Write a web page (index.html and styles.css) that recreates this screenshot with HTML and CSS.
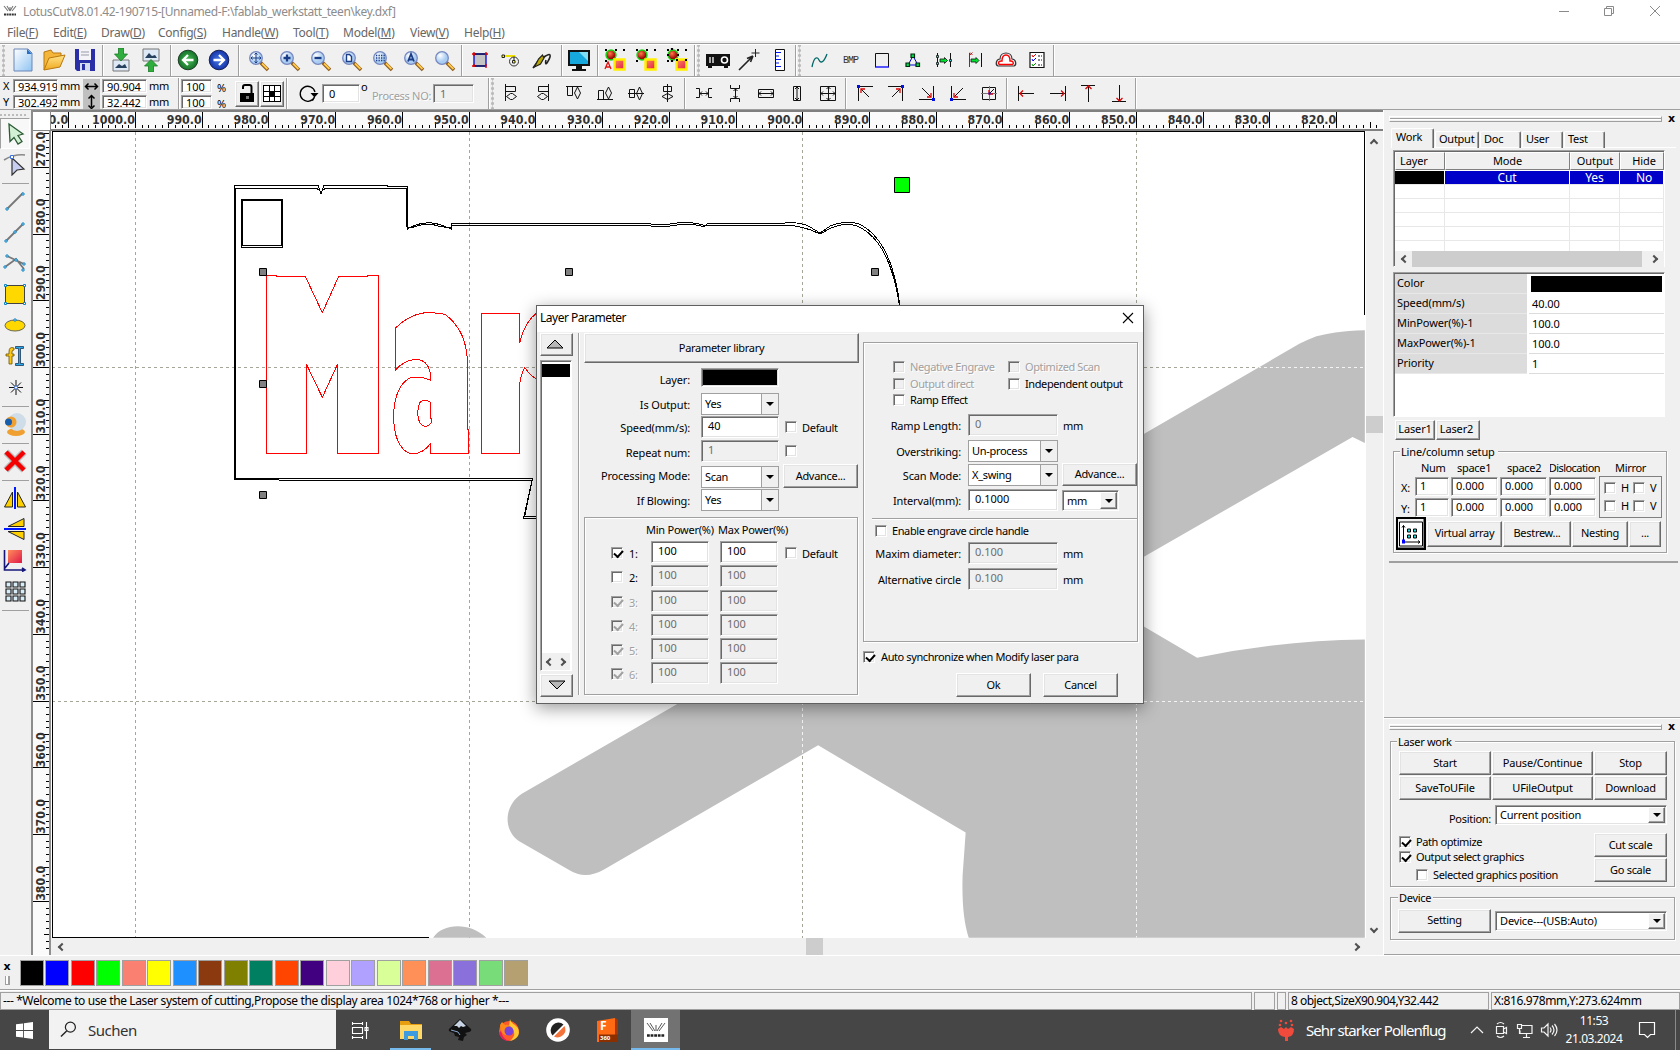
FILE: index.html
```html
<!DOCTYPE html>
<html lang="en">
<head>
<meta charset="utf-8">
<title>LotusCut</title>
<link rel="stylesheet" href="styles.css">
</head>
<body>
<svg class="defs" width="0" height="0">
  <defs>
    <radialGradient id="lens" cx=".35" cy=".3"><stop offset="0" stop-color="#fff"/><stop offset="1" stop-color="#a9cdf2"/></radialGradient>
    <linearGradient id="page" x2="1" y2="1"><stop offset="0" stop-color="#fff"/><stop offset="1" stop-color="#8fc4f2"/></linearGradient>
    <linearGradient id="gold" x2="0" y2="1"><stop offset="0" stop-color="#ffe48a"/><stop offset="1" stop-color="#f0a91e"/></linearGradient>
    <linearGradient id="redg" x2="1" y2="1"><stop offset="0" stop-color="#ff8d5c"/><stop offset="1" stop-color="#e01848"/></linearGradient>
    <radialGradient id="ball" cx=".4" cy=".35"><stop offset="0" stop-color="#ff7a4a"/><stop offset="1" stop-color="#a00808"/></radialGradient>
    <radialGradient id="greenb"><stop offset="0" stop-color="#49c055"/><stop offset="1" stop-color="#14702a"/></radialGradient>
    <radialGradient id="blueb"><stop offset="0" stop-color="#4a7be8"/><stop offset="1" stop-color="#1433a8"/></radialGradient>
    <symbol id="mag" viewBox="0 0 24 24"><path d="M13.500 13.500l7.500 7.500" stroke="#8a5a20" stroke-width="3.600"/><path d="M15 14.500l5.500 5.500" stroke="#ffc94a" stroke-width="1.800"/><circle cx="9" cy="9" r="6.300" fill="url(#lens)" stroke="#7788c0" stroke-width="1.300"/></symbol>
    <symbol id="group" viewBox="0 0 24 24"><g fill="#000"><path d="M2 1h2v2H2zM12 1h2v2h-2zM20 1h2v2h-2zM2 12h2v2H2zM20 20h2v2h-2zM11 20h2v2h-2z"/></g><circle cx="8" cy="7" r="5" fill="url(#ball)" stroke="#18d818" stroke-width="1.400"/><path d="M11.500 11.500h10v10h-10z" fill="url(#redg)" stroke="#fff000" stroke-width="2.500"/></symbol>
  </defs>
</svg>

<header class="titlebar">
  <svg class="app-icon" viewBox="0 0 14 12"><path d="M1 1l4 5M4 1l3 5M10 1L7 6M13 1L9 6M7 2v4" stroke="#777" stroke-width="1.100" fill="none"/><path d="M1 9.500h12" stroke="#333" stroke-width="2" stroke-dasharray="2 .6"/></svg>
  <span class="title">LotusCutV8.01.42-190715-[Unnamed-F:\fablab_werkstatt_teen\key.dxf]</span>
  <svg class="winbtns" viewBox="0 0 110 20"><g fill="none" stroke="#8a8a8a"><path d="M3 10.500h10M48.500 7.500h7v7h-7zM50.500 7V5.500h7v7H56M94 5l10 10M104 5L94 15"/></g></svg>
</header>
<nav class="menubar">
  <span class="m1">File(<u>F</u>)</span><span class="m2">Edit(<u>E</u>)</span><span class="m3">Draw(<u>D</u>)</span><span class="m4">Config(<u>S</u>)</span><span class="m5">Handle(<u>W</u>)</span><span class="m6">Tool(<u>T</u>)</span><span class="m7">Model(<u>M</u>)</span><span class="m8">View(<u>V</u>)</span><span class="m9">Help(<u>H</u>)</span>
</nav>

<div class="toolbar top">
  <div class="tg a1 grip">
    <svg viewBox="0 0 24 24"><path d="M3 1h14l4 4v18H3z" fill="url(#page)" stroke="#6b86b8"/><path d="M16 1l5 5h-5z" fill="#2b6fc4"/></svg>
    <svg viewBox="0 0 24 24"><path d="M2 22V4l7-2 2 3h8v4" fill="#f3b63a" stroke="#b9780f"/><path d="M2 22L7 10l16-3-5 12z" fill="url(#gold)" stroke="#b9780f"/></svg>
    <svg viewBox="0 0 24 24"><path d="M2 1h20v22H4l-2-2z" fill="#2a2fa8"/><path d="M6 1h12v11H6z" fill="#f4f4f8"/><path d="M8 4h8M8 7h8" stroke="#99a"/><path d="M7 15h10v8H7z" fill="#d6dcec"/><path d="M9 16h3v6H9z" fill="#2a2fa8"/></svg>
  </div>
  <div class="tg a2">
    <svg viewBox="0 0 24 24"><path d="M4 12h16v11H4z" fill="#dfe9f5" stroke="#777"/><path d="M6 20l4-4 3 2 3-2 2 4z" fill="#27405e"/><path d="M9.500 0h5v6h4L12 13 5.500 6h4z" fill="#2fae3e" stroke="#1a7a26" stroke-width=".8"/></svg>
    <svg viewBox="0 0 24 24"><path d="M4 1h16v12H4z" fill="#dfe9f5" stroke="#777"/><path d="M6 10l4-5 3 3 3-1 2 3z" fill="#27405e"/><path d="M9.500 24h5v-6h4L12 11.500 5.500 18h4z" fill="#2fae3e" stroke="#1a7a26" stroke-width=".8"/></svg>
  </div>
  <div class="tg a3">
    <svg viewBox="0 0 24 24"><circle cx="12" cy="12" r="9.800" fill="url(#greenb)" stroke="#1d3c23"/><path d="M17.500 12H8M12 7l-5 5 5 5" fill="none" stroke="#fff" stroke-width="2.300"/></svg>
    <svg viewBox="0 0 24 24"><circle cx="12" cy="12" r="9.800" fill="url(#blueb)" stroke="#162050"/><path d="M6.500 12H16M12 7l5 5-5 5" fill="none" stroke="#fff" stroke-width="2.300"/></svg>
  </div>
  <div class="tg a4">
    <svg viewBox="0 0 24 24"><use href="#mag"/><path d="M9 4v10M4 9h10M7.500 5.500L9 4l1.500 1.500M7.500 12.500L9 14l1.500-1.500M5.500 7.500L4 9l1.500 1.500M12.500 7.500L14 9l-1.500 1.500" fill="none" stroke="#1b3c86"/></svg>
    <svg viewBox="0 0 24 24"><use href="#mag"/><path d="M9 5.500v7M5.500 9h7" stroke="#1b3c86" stroke-width="2.300"/></svg>
    <svg viewBox="0 0 24 24"><use href="#mag"/><path d="M5.500 9h7" stroke="#1b3c86" stroke-width="2.300"/></svg>
    <svg viewBox="0 0 24 24"><use href="#mag"/><path d="M6.500 5.500h3l2 2v5h-5z" fill="#fff" stroke="#1b3c86" stroke-width="1.400"/></svg>
    <svg viewBox="0 0 24 24"><use href="#mag"/><path d="M5 6.500h9M5 9h9M5 11.500h9" stroke="#1b3c86" stroke-width="1.300" stroke-dasharray="1.300 1.200"/></svg>
    <svg viewBox="0 0 24 24"><use href="#mag"/><path d="M6 12.500L9 5l3 7.500M7 10.500h4" fill="none" stroke="#1b3c86" stroke-width="1.800"/></svg>
    <svg viewBox="0 0 24 24"><use href="#mag"/></svg>
  </div>
  <div class="tg a5">
    <svg viewBox="0 0 24 24"><path d="M6 6h12v12H6z" fill="#c4c4c4" stroke="#0000d8" stroke-width="1.300"/><path d="M6 6h12M18 18H6" stroke="#111"/><path d="M6 4v4M4 6h3M18 4v3M17 6h3M6 16v3M4 18h3M18 16v4" stroke="#e00000" stroke-width="1.300"/></svg>
    <svg viewBox="0 0 24 24"><path d="M4 8h12" stroke="#f0e000" stroke-width="2"/><path d="M3 7h2.500v2.500H3zM13.500 12.500h2.500v2.500h-2.500z" fill="#ff0" stroke="#222"/><path d="M15 9v4" stroke="#222"/><circle cx="15" cy="13.500" r="4.500" fill="none" stroke="#333"/></svg>
    <svg viewBox="0 0 24 24"><path d="M3 20l5-7M11 14c0-4 8-9 9-7s-2 6-3 8-2 0-1-3" fill="none" stroke="#222" stroke-width="1.600"/><path d="M4.500 19l4-8 4-4 1.500 3-3.500 6z" fill="#b8a800" stroke="#222" stroke-width="1.200"/></svg>
  </div>
  <div class="tg a6">
    <svg viewBox="0 0 24 24"><path d="M1 2h22v16H1z" fill="#111"/><path d="M3 4h18v12H3z" fill="#16a8dc"/><path d="M12 4h9v9z" fill="#7fdcf5"/><path d="M9 18h6v3h4v2H5v-2h4z" fill="#111"/></svg>
  </div>
  <div class="tg a7">
    <svg viewBox="0 0 24 24"><use href="#group"/><path d="M2 21l3-7 3 7M3 19h4" fill="none" stroke="#e01010" stroke-width="1.300"/></svg>
    <svg viewBox="0 0 24 24"><use href="#group"/></svg>
    <svg viewBox="0 0 24 24"><use href="#group"/><path d="M2 7h2M12 7h2M7 0v2M7 12v2M11 12h2M20 12h2" stroke="#000" stroke-width="2.200"/></svg>
  </div>
  <div class="tg a8 grip">
    <svg viewBox="0 0 24 24"><path d="M0 6h24v12h-2v2h-4v-2H6v2H2v-2H0z" fill="#111"/><circle cx="18.500" cy="12" r="3" fill="#111" stroke="#fff" stroke-width="1.600"/><path d="M4 9v6M7 9v6" stroke="#fff" stroke-width="1.300"/></svg>
    <svg viewBox="0 0 24 24"><path d="M2 22L16 8M16 8l-6 2.500M16 8l-2.500 6" stroke="#222" stroke-width="1.600" fill="none"/><path d="M18.500 1v8M14.500 5h8" stroke="#222"/></svg>
    <svg viewBox="0 0 24 24"><path d="M7.500 1.500h9v21h-9z" fill="#fff" stroke="#111"/><path d="M8 4.500h5M8 8h3M8 11.500h5M8 15h3M8 18.500h5" stroke="#0018f0" stroke-width="1.200"/></svg>
  </div>
  <div class="tg a9 grip">
    <svg viewBox="0 0 24 24"><path d="M4 19c2-10 5-11 7-7s5 2 8-6" fill="none" stroke="#006868" stroke-width="1.300"/></svg>
    <span class="bmp">BMP</span>
    <svg viewBox="0 0 24 24"><path d="M5.500 19V5.500h13V19" fill="none" stroke="#111"/><path d="M5 19h14" stroke="#00f" stroke-width="1.300"/></svg>
    <svg viewBox="0 0 24 24"><path d="M12 8l-5 9h10z" fill="none" stroke="#0000d0"/><path d="M10 6h3.500v3.500H10zM5 15h3.500v3.500H5zM15 15h3.500v3.500H15z" fill="#00d84a" stroke="#002a10" stroke-width="1.200"/></svg>
    <svg viewBox="0 0 24 24"><path d="M5.500 5v14M18.500 5v14" stroke="#111"/><path d="M8 11h4.500V9.500L15.500 12.500l-3 3V14H8z" fill="#00e030" stroke="#111" stroke-width=".8"/><path d="M4.500 7.500h2v2h-2zM4.500 14.500h2v2h-2zM17.500 11.500h2v2h-2z" fill="#40d8d8" stroke="#111" stroke-width=".8"/></svg>
    <svg viewBox="0 0 24 24"><path d="M6.500 5v14" stroke="#e00000"/><path d="M18.500 5v14" stroke="#111"/><path d="M8 11h5V9.500l3 3-3 3V14H8z" fill="#00e030" stroke="#111" stroke-width=".8"/><path d="M7 4.500l2.500 2.500M9.500 4.500L7 7" stroke="#a00" stroke-width=".8"/></svg>
    <svg viewBox="0 0 24 24"><path d="M4 18C1 17 2 11 6 11 6 3 18 3 18 11c4 0 5 6 2 7z" fill="none" stroke="#333" stroke-width="1.200"/><path d="M5.500 16.500c-2-1-1-4 2.500-3.500 0-8 8-8 8 0 3.500-.5 4 2.500 2.500 3.500z" fill="#fff" stroke="#f00" stroke-width="1.400"/></svg>
    <svg viewBox="0 0 24 24"><path d="M5 4.500h14v15H5z" fill="#fff" stroke="#111" stroke-width="1.200"/><path d="M7 7l1 2 3-3" fill="none" stroke="#e00"/><path d="M7 11l1 2 3-3" fill="none" stroke="#00f"/><path d="M7 16l1 2 3-3" fill="none" stroke="#090"/><path d="M13 8h2M16 8h1M13 12h2M16 12h1M13 17h2M16 17h1" stroke="#111" stroke-width="1.200"/></svg>
  </div>
</div>

<div class="toolbar second">
  <div class="tg b1">
    <div class="pair lab"><span>X</span><span>Y</span></div>
    <div class="pair"><span class="field w45">934.919</span><span class="field w45">302.492</span></div>
    <div class="pair unit"><span>mm</span><span>mm</span></div>
    <div class="axes"><svg viewBox="0 0 17 30"><path d="M3 7.500h11M5.500 4.500l-3 3 3 3M11.500 4.500l3 3-3 3M8.500 17v11M5.500 19.500l3-3 3 3M5.500 26.500l3 3 3-3" fill="none" stroke="#000" stroke-width="1.500"/></svg></div>
    <div class="pair"><span class="field w45">90.904</span><span class="field w45">32.442</span></div>
    <div class="pair unit"><span>mm</span><span>mm</span></div>
  </div>
  <div class="tg b2">
    <div class="pair"><span class="field w31">100</span><span class="field w31">100</span></div>
    <div class="pair pct"><span>%</span><span>%</span></div>
    <div class="btn sq"><svg viewBox="0 0 22 24"><path d="M4 11h14v9H4z" fill="#000"/><path d="M15.500 11V5q0-2-2-2H9Q7 3 7 5v2" fill="none" stroke="#000" stroke-width="2"/><path d="M10 14h3v3h-3z" fill="#777"/></svg></div>
    <div class="btn sq"><svg viewBox="0 0 22 24"><g shape-rendering="crispEdges"><path d="M2.500 3.500h17v16h-17zM8.500 4v15M13.500 4v15M3 9.500h16M3 14.500h16" fill="#fff" stroke="#000"/><path d="M8 9h6v6H8z" fill="#000"/></g></svg></div>
  </div>
  <div class="tg b3">
    <svg viewBox="0 0 24 24"><path d="M18.500 15A7.500 7.500 0 1 1 19 10" fill="none" stroke="#000" stroke-width="1.300"/><path d="M14.500 11h8l-4 4.500z"/><path d="M18 16l-1.500 3" stroke="#000"/></svg>
    <span class="field rot">0</span><span class="deg">o</span><span class="dis proc">Process NO:</span><span class="field off pno">1</span>
  </div>
  <div class="tg b4 grip">
    <svg viewBox="0 0 24 24"><g class="k"><path d="M5.500 3v17M5.500 5.500h10v5h-10M6.500 15.500l4-3h2l4 3-4 3h-2z"/></g></svg>
    <svg viewBox="0 0 24 24"><g class="k"><path d="M17.500 3v17M17.500 5.500h-10v5h10M16.500 15.500l-4-3h-2l-4 3 4 3h2z"/></g></svg>
    <svg viewBox="0 0 24 24"><g class="k"><path d="M4 5.500h16M5.500 5.500v9h5v-9M15.500 6l3 6-3 6-3-6z"/></g></svg>
    <svg viewBox="0 0 24 24"><g class="k"><path d="M4 18.500h16M5.500 18.500v-9h5v9M15.500 6l3 6-3 6-3-6z"/></g></svg>
    <svg viewBox="0 0 24 24"><g class="k"><path d="M4 12.500h16M5.500 8.500h5v8h-5zM15.500 6l3 6.500-3 6.500-3-6.500z"/></g></svg>
    <svg viewBox="0 0 24 24"><g class="k"><path d="M12.500 3v18M8.500 5.500h8v5h-8zM12.500 12.500l5.500 3-5.500 3-5.500-3z"/></g></svg>
  </div>
  <div class="tg b5">
    <svg viewBox="0 0 24 24"><g class="k"><path d="M4 7.500h3.500v9H4M20 7.500h-3.500v9H20M8 12.500h8M10 10.500l-2 2 2 2M14 10.500l2 2-2 2"/></g></svg>
    <svg viewBox="0 0 24 24"><g class="k"><path d="M7.500 4v3.500h9V4M7.500 21v-3.500h9V21M12.500 8v9M10.500 10l2-2 2 2M10.500 15l2 2 2-2"/></g></svg>
    <svg viewBox="0 0 24 24"><g class="k"><path d="M4.500 8.500h15v8h-15zM5 12.500h14M7 10.500l-2 2 2 2M17 10.500l2 2-2 2"/></g></svg>
    <svg viewBox="0 0 24 24"><g class="k"><path d="M8.500 5.500h7v14h-7zM12 6v13M10 8l2-2 2 2M10 17l2 2 2-2"/></g></svg>
    <svg viewBox="0 0 24 24"><g class="k"><path d="M4.500 5.500h15v14h-15zM5 12.500h14M12.500 6v13M7 10.500l-2 2 2 2M17 10.500l2 2-2 2M10.500 8l2-2 2 2M10.500 17l2 2 2-2"/></g></svg>
  </div>
  <div class="tg b6">
    <svg viewBox="0 0 24 24"><g class="k"><path d="M5.500 20V5.500H20M8 8l8 8"/></g><path d="M8 12V8h4" class="r"/><path d="M4 4h3v3H4z" class="b"/></svg>
    <svg viewBox="0 0 24 24"><g class="k"><path d="M18.500 20V5.500H4M16 8l-8 8"/></g><path d="M12 8h4v4" class="r"/><path d="M17 4h3v3h-3z" class="b"/></svg>
    <svg viewBox="0 0 24 24"><g class="k"><path d="M18.500 5v13.500H4M7 7l9 9"/></g><path d="M12 16h4v-4" class="r"/><path d="M17 17h3v3h-3z" class="b"/></svg>
    <svg viewBox="0 0 24 24"><g class="k"><path d="M5.500 5v13.500H20M17 7l-9 9"/></g><path d="M8 12v4h4" class="r"/><path d="M4 17h3v3H4z" class="b"/></svg>
    <svg viewBox="0 0 24 24"><g class="k"><path d="M5.500 6.500h13v12h-13zM17 8l-4 4"/></g><path d="M4 12.500h16M12.500 5v15" stroke="#777"/><path d="M12 9v4h4" class="r"/><path d="M11.500 11.500h2v2h-2z" class="b"/></svg>
  </div>
  <div class="tg b7">
    <svg viewBox="0 0 24 24"><g class="k"><path d="M4.500 5v15M5 12.500h15"/></g><path d="M9 9.500l-3 3 3 3" class="r"/></svg>
    <svg viewBox="0 0 24 24"><g class="k"><path d="M20.500 5v15M5 12.500h15"/></g><path d="M16 9.500l3 3-3 3" class="r"/></svg>
    <svg viewBox="0 0 24 24"><g class="k"><path d="M5 4.500h14M12.500 5v16"/></g><path d="M9.500 8l3-3 3 3" class="r"/></svg>
    <svg viewBox="0 0 24 24"><g class="k"><path d="M5 20.500h14M12.500 4v16"/></g><path d="M9.500 17l3 3 3-3" class="r"/></svg>
  </div>
</div>

<main class="work">
  <aside class="tools">
    <div class="hdots"></div>
    <div class="cell on"><svg viewBox="0 0 24 24"><path d="M6 2l14 10-5 1.500 4 6-4 2.500-4-6.500-4 4z" fill="#d2f0d4" stroke="#2c5a34" stroke-width="1.300"/></svg></div>
    <div class="cell"><svg viewBox="0 0 24 24"><path d="M1 8q10-6 21-5" fill="none" stroke="#888" stroke-width="1.500"/><path d="M9 6l12 11-7 1-5 5z" fill="#c9cff0" stroke="#333" stroke-width="1.200"/><path d="M7.500 3.500h3v3h-3z" fill="#fff" stroke="#3a6fe0"/></svg></div>
    <hr>
    <div class="cell"><svg viewBox="0 0 24 24"><path d="M4 20L20 4" stroke="#777" stroke-width="1.800"/><path class="nd" d="M3 19h2v2H3zM19 4h2v2h-2z"/></svg></div>
    <div class="cell"><svg viewBox="0 0 24 24"><path d="M3 21L20 4" stroke="#777" stroke-width="1.800"/><path class="nd" d="M2 20h2v2H2zM19 3h2v2h-2zM11 11h2v2h-2z"/></svg></div>
    <div class="cell"><svg viewBox="0 0 24 24"><path d="M2 16l11-8 8 10M4 5l17 8" stroke="#777" stroke-width="1.800" fill="none"/><path class="nd" d="M1 15h2v2H1zM3 4h2v2H3zM12 8h2v2h-2zM20 12h2v2h-2zM19 18h2v2h-2z"/></svg></div>
    <div class="cell"><svg viewBox="0 0 24 24"><path d="M2.500 3.500h19v18h-19z" fill="#ffd800" stroke="#444"/><path class="nd" d="M1.500 2.500h2v2h-2zM20.500 2.500h2v2h-2zM1.500 20.500h2v2h-2zM20.500 20.500h2v2h-2z"/></svg></div>
    <div class="cell"><svg viewBox="0 0 24 24"><ellipse cx="12" cy="12.500" rx="10" ry="5.500" fill="#ffd800" stroke="#665"/><path class="nd" d="M11 6h2v2h-2z"/></svg></div>
    <div class="cell"><svg viewBox="0 0 24 24"><path d="M11 4q-5-2-5 4v2H3v2h3v8h3v-8h2v-2H9V8q0-2 2-2z" fill="#ffc810" stroke="#6a5000" stroke-width=".8"/><path d="M12.500 2.500h8v2h-3v15h3v2h-8v-2h3v-15h-3z" fill="#28a8e8" stroke="#1a3a5a" stroke-width=".8"/></svg></div>
    <div class="cell"><svg viewBox="0 0 24 24"><path d="M13 5v15M6 12.500h14M8 7.500l10 10M18 7.500l-10 10" stroke="#111"/><circle cx="13" cy="12.500" r="1.600" fill="#fff" stroke="#3a6fe0"/></svg></div>
    <hr>
    <div class="cell"><svg viewBox="0 0 24 24"><ellipse cx="13" cy="20" rx="9" ry="4" fill="#f0a030"/><circle cx="14" cy="10" r="9" fill="#cfdde8"/><circle cx="8" cy="10" r="5.500" fill="#f0a030"/><circle cx="5.500" cy="10" r="3.500" fill="#155fae"/></svg></div>
    <hr>
    <div class="cell"><svg viewBox="0 0 24 24"><path d="M3 3l18 18M21 3L3 21" stroke="#bbb" stroke-width="7"/><path d="M3 3l18 18M21 3L3 21" stroke="#f40000" stroke-width="4.500"/></svg></div>
    <hr>
    <div class="cell"><svg viewBox="0 0 24 24"><path d="M9.500 6v15H1.500zM14.500 6v15h8z" fill="#ffd000" stroke="#222"/><path d="M12 1v22" stroke="#0018ff" stroke-width="2"/></svg></div>
    <div class="cell"><svg viewBox="0 0 24 24"><path d="M21 1.500v8H5zM21 22.500v-8H5z" fill="#ffd000" stroke="#222"/><path d="M1 12h22" stroke="#0018ff" stroke-width="2"/></svg></div>
    <div class="cell"><svg viewBox="0 0 24 24"><path d="M5 2h14v13H5z" fill="url(#redg)"/><path d="M1.500 2v20H22M19 20l3 2-3 1.500M2 20l4-5" fill="none" stroke="#16167a" stroke-width="1.600"/></svg></div>
    <div class="cell"><svg viewBox="0 0 24 24"><path d="M3 3h5v5H3zM10 3h5v5h-5zM17 3h5v5h-5zM3 10h5v5H3zM10 10h5v5h-5zM17 10h5v5h-5zM3 17h5v5H3zM10 17h5v5h-5zM17 17h5v5h-5z" fill="#d8ecf8" stroke="#111" stroke-width="1.100"/></svg></div>
    <hr>
  </aside>

  <section class="editor">
    <div class="corner"></div>
    <svg id="hruler" class="hruler" viewBox="51 110 1332 21"></svg>
    <svg id="vruler" class="vruler" viewBox="33 131 18 824"></svg>
    <svg class="canvas" viewBox="51 131 1315 807">
      <defs>
        <clipPath id="inGrey"><use href="#greyShape" transform="translate(430 170) scale(.6122 .5038)"/></clipPath>
        <path id="greyShape" d="M1527 318C1490 318 1462 326 1448 330Q1435 336 1420 345L404 1060L150 1238C122 1260 118 1308 145 1332L228 1390Q254 1410 285 1388L634 1142L875 1315L870 1400Q868 1480 880 1524L1527 1524V932Q1390 934 1253 968L1068 836L1507 530L1527 542Z"/>
        <path id="grid" d="M135.500 132V938M469.500 132V938M802.500 132V938M1136.500 132V938M52 367.500H1366M52 701.500H1366"/>
      </defs>
      <rect x="51" y="131" width="1315" height="807" fill="#fff"/>
      <use href="#grid" class="dash"/>
      <g transform="translate(430 170) scale(.6122 .5038)" fill="#bfbfbf"><use href="#greyShape"/><path d="M5 1524C20 1495 65 1492 92 1524z"/></g>
      <g clip-path="url(#inGrey)"><use href="#grid" class="dash light"/></g>
      <path d="M52.500 937V131.500H1364.500V315M52 937.500H429" class="ink"/>
      <g class="ink">
        <path d="M234.500 480V185.500H318L321 194L324 185.500H387V186.500H407.500V229L413 226Q428 220 441 225L451.500 229V223.500H634L667 224.500Q690 220 706 226L707.500 223.500H780Q800 221 810 227L820 233L831 225.500Q846 220 859 224Q892 240 900 306"/>
        <path d="M235.500 479V188.500H317L321 192L325 188.500H406.500V227L412 227.500Q428 222 438 226L451 228V225.500H634L667 226.500Q690 222 704 227L706 225.500H780Q800 224 820 234L832 227.500Q846 222 857 226Q890 240 899.500 306"/>
        <path d="M234 478.500H532.500L524.500 517V516.500H560M279 480.500H532L523.500 518.500H560M234 479.500H279"/>
        <path d="M241.500 199.500H282.500V247.500H241.500zM242.500 200.500H281.500V245.500H242.500z"/>
      </g>
      <g class="ink red" transform="translate(230 170) scale(.33333)">
        <path d="M109.500 316.500H141V319.500H226L277 428L326 319.500H414V316.500H445.500V850.500H322.500V583L277 682L229.500 583V850.500H109.500z"/>
        <path d="M497 600V474C530 440 570 428 600 427L645 433C695 470 712 520 712 580L713 780H716V850H602V820C585 845 560 852 543 852C505 840 491 790 491 740C491 680 510 635 545 622H575L602 631C603 595 590 568 556 568C530 570 510 585 497 600zM602 697Q582 685 570 697Q556 730 570 760Q584 776 598 764L604 757V745H602z"/>
        <path d="M940 420C905 430 880 470 869 520V430.500H754.500V850.500H868.500V645Q872 615 884 592Q905 625 940 636"/>
      </g>
      <g fill="#808080" stroke="#000"><path d="M259.500 268.500h7v7h-7zM259.500 380.500h7v7h-7zM259.500 491.500h7v7h-7zM565.500 268.500h7v7h-7zM871.500 268.500h7v7h-7z"/><path fill="#0f0" d="M894.500 177.500h15v15h-15z"/></g>
    </svg>
    <div class="vscroll"><i class="chev up"></i><b></b><i class="chev down"></i></div>
    <div class="hscroll"><i class="chev left"></i><b></b><i class="chev right"></i></div>
  </section>

  <aside class="panels">
    <section class="panel upper">
      <div class="caption"><i></i><b>x</b></div>
      <div class="tabs"><span class="on">Work</span><span>Output</span><span>Doc</span><span>User</span><span>Test</span></div>
      <div class="layers">
        <div class="lr head"><span>Layer</span><span>Mode</span><span>Output</span><span>Hide</span></div>
        <div class="lr sel"><span></span><span>Cut</span><span>Yes</span><span>No</span></div>
        <div class="lr"><span></span><span></span><span></span><span></span></div>
        <div class="lr"><span></span><span></span><span></span><span></span></div>
        <div class="lr"><span></span><span></span><span></span><span></span></div>
        <div class="lr"><span></span><span></span><span></span><span></span></div>
        <div class="lr last"><span></span><span></span><span></span><span></span></div>
        <div class="lscroll"><i class="chev left"></i><b></b><i class="chev right"></i></div>
      </div>
      <div class="props">
        <div><span>Color</span><b class="black"></b></div>
        <div><span>Speed(mm/s)</span><b>40.00</b></div>
        <div><span>MinPower(%)-1</span><b>100.0</b></div>
        <div><span>MaxPower(%)-1</span><b>100.0</b></div>
        <div><span>Priority</span><b>1</b></div>
      </div>
      <div class="lasers"><span class="btn">Laser1</span><span class="btn">Laser2</span></div>
      <div class="box array">
        <span class="legend">Line/column setup</span>
        <div class="ahead"><span>Num</span><span>space1</span><span>space2</span><span class="clip"><em>Dislocation</em></span><span>Mirror</span></div>
        <div class="abody">
          <div class="agrid">
            <span>X:</span><span class="field">1</span><span class="field">0.000</span><span class="field">0.000</span><span class="field">0.000</span>
            <span>Y:</span><span class="field">1</span><span class="field">0.000</span><span class="field">0.000</span><span class="field">0.000</span>
          </div>
          <div class="mirror"><i class="ck"></i><span>H</span><i class="ck"></i><span>V</span><i class="ck"></i><span>H</span><i class="ck"></i><span>V</span></div>
        </div>
        <div class="abtns">
          <span class="abtn"><svg viewBox="0 0 24 25"><path d="M.5.500h23v24H.5z" fill="#fff" stroke="#000"/><path d="M4.500 4v16.500H21M3 6l1.500-2L6 6M19 19l2 1.500L19 22" fill="none" stroke="#000"/><path d="M3 18h3v4H3z" fill="#00f"/><path d="M8.500 7.500h3v3h-3zM14.500 7.500h3v3h-3zM8.500 13.500h3v3h-3zM14.500 13.500h3v3h-3z" fill="#20e0e0" stroke="#000"/></svg></span>
          <span class="btn v1">Virtual array</span><span class="btn v2">Bestrew...</span><span class="btn v3">Nesting</span><span class="btn v4">...</span>
        </div>
      </div>
    </section>
    <section class="panel lower">
      <div class="caption"><i></i><b>x</b></div>
      <div class="box job">
        <span class="legend">Laser work</span>
        <div class="jbtns"><span class="btn">Start</span><span class="btn">Pause/Continue</span><span class="btn">Stop</span><span class="btn">SaveToUFile</span><span class="btn">UFileOutput</span><span class="btn">Download</span></div>
        <div class="pos"><span>Position:</span><span class="combo sunk"><em>Current position</em><i></i></span></div>
        <div class="jopts">
          <div class="checks">
            <label><i class="ck tick"></i>Path optimize</label>
            <label><i class="ck tick"></i>Output select graphics</label>
            <label class="sub"><i class="ck"></i>Selected graphics position</label>
          </div>
          <div class="scales"><span class="btn">Cut scale</span><span class="btn">Go scale</span></div>
        </div>
      </div>
      <div class="box device">
        <span class="legend">Device</span>
        <span class="btn">Setting</span><span class="combo sunk"><em>Device---(USB:Auto)</em><i></i></span>
      </div>
    </section>
  </aside>
</main>

<div class="palette">
  <div class="pgrip"><b>x</b><i></i></div>
  <i class="c1"></i><i class="c2"></i><i class="c3"></i><i class="c4"></i><i class="c5"></i><i class="c6"></i><i class="c7"></i><i class="c8"></i><i class="c9"></i><i class="c10"></i><i class="c11"></i><i class="c12"></i><i class="c13"></i><i class="c14"></i><i class="c15"></i><i class="c16"></i><i class="c17"></i><i class="c18"></i><i class="c19"></i><i class="c20"></i>
</div>

<footer class="status"><span>--- *Welcome to use the Laser system of cutting,Propose the display area 1024*768 or higher *---</span><span></span><span></span><span class="size">8 object,SizeX90.904,Y32.442</span><span>X:816.978mm,Y:273.624mm</span></footer>

<div class="taskbar">
  <div class="start"><svg viewBox="0 0 16 16"><path d="M0 2.200L6.600 1.300V7.600H0zM7.400 1.200L16 0V7.600H7.400zM0 8.400H6.600V14.700L0 13.800zM7.400 8.400H16V16L7.400 14.800z" fill="#fff"/></svg></div>
  <div class="search"><svg viewBox="0 0 18 18"><circle cx="11" cy="6.500" r="5.300" fill="none" stroke="#222" stroke-width="1.300"/><path d="M7 10.500L1 16.500" stroke="#222" stroke-width="1.500"/></svg>Suchen</div>
  <div class="task"><svg viewBox="0 0 24 24"><path d="M3.500 9.500h10v6h-10zM3 5.500h11M3 19.500h11M3.500 4v3M13.500 4v3M3.500 18v3M13.500 18v3M17.500 4v17M16 9.500h3v3h-3z" fill="none" stroke="#fff" stroke-width="1.100"/></svg></div>
  <div class="task run"><svg viewBox="0 0 24 24"><path d="M1 3h9l2 3h11v15H1z" fill="#e8a010"/><path d="M1 7h22v14H1z" fill="#ffd868"/><path d="M5 22v-9h14v9h-4v-4H9v4z" fill="#3f9be0"/></svg></div>
  <div class="task"><svg viewBox="0 0 24 24"><path d="M12 1l11 10q1 2-2 3l-4 1 2 2-3 2-1 4-5-1 1-3-4-1-1-3-3-1q-3-1-2-3z" fill="#111"/><path d="M12 2l6 6-3 1-2-1-2 2-2-2-3 0z" fill="#c8d4e4"/><path d="M3 12l7 2 2 3" stroke="#8aa8cc" fill="none"/></svg></div>
  <div class="task"><svg viewBox="0 0 24 24"><circle cx="12" cy="13" r="10" fill="#ff5a2a"/><path d="M13 1q1 4 5 6 6 5 3 11-3 4-8 5 9-8-1-15z" fill="#ffc830"/><path d="M3 7l2-3 3 3q5-1 7 4l-2 1q1 6-5 5-5-2-5-10z" fill="#ff8a1a"/><circle cx="12" cy="13" r="4.500" fill="#7a42d8"/><path d="M2 15q3 9 11 8-7-1-9-10z" fill="#e82060"/></svg></div>
  <div class="task"><svg viewBox="0 0 24 24"><circle cx="12" cy="12" r="11.800" fill="#fff"/><path d="M17.500 6.500A7.800 7.800 0 0 0 6.500 17.500z" fill="#222"/><path d="M18.500 8A7.800 7.800 0 0 1 8 18.500z" fill="#f4733a"/></svg></div>
  <div class="task f360"><svg viewBox="0 0 24 24"><path d="M2 3l18-3v24H2z" fill="#ff6a13"/><path d="M20 0l3 2v22h-3z" fill="#a83800"/><path d="M4 16.500h19V24H4z" fill="#8a2f00"/></svg><b>F</b><small>360</small></div>
  <div class="task run active"><svg viewBox="0 0 24 24"><path d="M0 0h24v24H0z" fill="#fff"/><path d="M3 5l6 8M6 5l5 8M21 5l-6 8M18 5l-5 8M12 7v6" stroke="#444" stroke-width=".9" fill="none"/><path d="M3 17.500h18" stroke="#222" stroke-width="2.600" stroke-dasharray="2.800 .8"/></svg></div>
  <div class="tray">
    <svg class="pollen" viewBox="0 0 18 24"><g fill="#f04a3c"><path d="M1 11l3-2 3 2 2-2 2 2 3-2 3 2q0 7-6 8v4H8v-4Q1 18 1 11z"/><circle cx="9" cy="5" r="1.300"/><circle cx="4" cy="3" r="1.300"/><circle cx="14" cy="3" r="1.300"/><circle cx="3" cy="7" r="1.300"/><circle cx="15" cy="7" r="1.300"/></g></svg>
    <span class="news">Sehr starker Pollenflug</span>
    <svg class="ticons" viewBox="0 0 88 24"><g fill="none" stroke="#f4f4f4" stroke-width="1.200"><path d="M1 15l6-6 6 6"/><path d="M26.500 8.500h7v7h-7zM33.500 11l3-1.500v6l-3-1.500M27 6q3.500-3 7 0M27 18q3.500 3 7 0"/><path d="M51 7.500h11v8H50v-3M56.500 16v3M53 19.500h7M47.500 6.500h4v4h-4zM49.500 10v6"/><path d="M71.500 10h2.500l4-4v12l-4-4h-2.500zM80 9.500q2 2.500 0 5M82 7.500q4 4.500 0 9M84.500 6q5 6 0 12"/></g></svg>
    <span class="clock">11:53<br>21.03.2024</span>
    <svg class="note" viewBox="0 0 18 18"><path d="M1.500 1.500h15v12h-4l-3 3-3-3h-5z" fill="none" stroke="#fff" stroke-width="1.200"/></svg>
    <i class="peek"></i>
  </div>
</div>

<div class="dialog">
  <div class="dtitle"><span>Layer Parameter</span><svg viewBox="0 0 12 12"><path d="M1 1l10 10M11 1L1 11" stroke="#000" stroke-width="1.100"/></svg></div>
  <div class="dbody">
    <div class="dlist">
      <span class="btn first"><svg viewBox="0 0 18 10"><path d="M1 9L9 1l8 8z" fill="#b8b8b8" stroke="#000"/></svg></span>
      <div class="list"><b></b><div><i class="chev left"></i><i class="chev right"></i></div></div>
      <span class="btn"><svg viewBox="0 0 18 10"><path d="M1 1l8 8 8-8z" fill="#b8b8b8" stroke="#000"/></svg></span>
    </div>
    <div class="dmid">
      <span class="btn lib">Parameter library</span>
      <div class="form">
        <div class="fr f1"><span class="fl">Layer:</span><span class="field swatch"></span></div>
        <div class="fr f2"><span class="fl">Is Output:</span><span class="combo"><em>Yes</em><i></i></span></div>
        <div class="fr f3"><span class="fl">Speed(mm/s):</span><span class="field">40</span><i class="ck"></i><span class="df">Default</span></div>
        <div class="fr f4"><span class="fl">Repeat num:</span><span class="field off">1</span><i class="ck"></i></div>
        <div class="fr f5"><span class="fl">Processing Mode:</span><span class="combo"><em>Scan</em><i></i></span><span class="btn adv">Advance...</span></div>
        <div class="fr f6"><span class="fl">If Blowing:</span><span class="combo"><em>Yes</em><i></i></span></div>
      </div>
      <div class="box power">
        <div class="phead"><span>Min Power(%)</span><span>Max Power(%)</span></div>
        <div class="pr"><i class="ck tick"></i><span>1:</span><span class="field">100</span><span class="field">100</span><i class="ck"></i><span class="df">Default</span></div>
        <div class="pr"><i class="ck"></i><span>2:</span><span class="field off">100</span><span class="field off">100</span></div>
        <div class="pr"><i class="ck tick off"></i><span class="dis">3:</span><span class="field off">100</span><span class="field off">100</span></div>
        <div class="pr"><i class="ck tick off"></i><span class="dis">4:</span><span class="field off">100</span><span class="field off">100</span></div>
        <div class="pr"><i class="ck tick off"></i><span class="dis">5:</span><span class="field off">100</span><span class="field off">100</span></div>
        <div class="pr"><i class="ck tick off"></i><span class="dis">6:</span><span class="field off">100</span><span class="field off">100</span></div>
      </div>
    </div>
    <div class="dright">
      <div class="box scan">
        <div class="opts">
          <label class="dis"><i class="ck off"></i>Negative Engrave</label><label class="dis"><i class="ck off"></i>Optimized Scan</label>
          <label class="dis"><i class="ck off"></i>Output direct</label><label><i class="ck"></i>Independent output</label>
          <label><i class="ck"></i>Ramp Effect</label>
        </div>
        <div class="sr s1"><span class="fl">Ramp Length:</span><span class="field off">0</span><span class="mm">mm</span></div>
        <div class="sr s2"><span class="fl">Overstriking:</span><span class="combo"><em>Un-process</em><i></i></span></div>
        <div class="sr s3"><span class="fl">Scan Mode:</span><span class="combo"><em>X_swing</em><i></i></span><span class="btn adv">Advance...</span></div>
        <div class="sr s4"><span class="fl">Interval(mm):</span><span class="field">0.1000</span><span class="combo sunk unitc"><em>mm</em><i></i></span></div>
        <div class="rule"></div>
        <label class="eng"><i class="ck"></i>Enable engrave circle handle</label>
        <div class="sr s5"><span class="fl">Maxim diameter:</span><span class="field off">0.100</span><span class="mm">mm</span></div>
        <div class="sr s6"><span class="fl">Alternative circle</span><span class="field off">0.100</span><span class="mm">mm</span></div>
      </div>
      <label class="sync"><i class="ck tick"></i>Auto synchronize when Modify laser para</label>
      <div class="okrow"><span class="btn">Ok</span><span class="btn">Cancel</span></div>
    </div>
  </div>
</div>
<script src="script.js"></script>
</body>
</html>
```
FILE: styles.css
```css
* { box-sizing: border-box; }
body { margin: 0; width: 1680px; height: 1050px; overflow: hidden; background: #f0f0f0; color: #000; font: 11px/14px "Noto Sans", sans-serif; letter-spacing: -.3px; white-space: nowrap; }
em, i { font-style: normal; }
svg { display: block; flex: none; }
.defs { position: absolute; }
.k { fill: none; stroke: #111; }
.r { fill: none; stroke: #e00000; stroke-width: 1.3; }
.b { fill: #0010e8; }
.nd { fill: #fff; stroke: #0a84c8; }

.titlebar { display: flex; height: 22px; background: #fff; align-items: center; color: #8c8c8c; font-size: 12px; padding: 0 11px 0 3px; }
.app-icon { width: 14px; height: 12px; margin-right: 6px; }
.title { letter-spacing: -.38px; padding-top: 1px; }
.winbtns { width: 110px; height: 20px; margin-left: auto; margin-right: 3px; }
.menubar { display: flex; height: 19px; background: #fff; padding-left: 7px; color: #666; font-size: 12px; line-height: 21px; letter-spacing: -.25px; }
.m1 { width: 46px; } .m2 { width: 48px; } .m3 { width: 57px; } .m4 { width: 64px; } .m5 { width: 71px; } .m6 { width: 50px; } .m7 { width: 67px; } .m8 { width: 54px; }

.toolbar { display: flex; background: #f0f0f0; }
.toolbar.top { height: 36px; padding-top: 4px; background: linear-gradient(#f0f0f0 2px, #a0a0a0 2px 3px, #fff 3px 4px, #f0f0f0 4px); border-bottom: 1px solid #a0a0a0; }
.toolbar.second { height: 33px; border-top: 1px solid #fff; border-bottom: 1px solid #a0a0a0; }
.tg { display: flex; align-items: center; border-right: 1px solid #a0a0a0; box-shadow: 1px 0 #fff; flex: none; }
.tg > svg { width: 24px; height: 24px; margin: -2px 3.5px 0; }
.grip { background: radial-gradient(#bbb 1px, transparent 1.500px) 2px 3px / 3px 5px repeat-y; }
.a1 { width: 103px; padding-left: 7.5px; } .a2 { width: 68px; padding-left: 3px; } .a3 { width: 68px; padding-left: 1px; } .a4 { width: 223px; padding-left: 4px; } .a5 { width: 100px; padding-left: 2px; } .a6 { width: 36px; padding-left: 1px; } .a7 { width: 97px; padding-left: 1px; } .a8 { width: 101px; padding-left: 7px; } .a9 { width: 258px; padding-left: 8px; }
.a2 > svg { margin: -2px 3px 0; }
.a4 > svg { transform: translateY(1px); }
.bmp { width: 31px; text-align: center; font: 10px "Liberation Mono", monospace; color: #333; letter-spacing: -1px; }
.b1 { width: 179px; padding-left: 2px; } .b2 { width: 108px; padding-left: 2px; } .b3 { width: 202px; padding-left: 6px; } .b4 { width: 196px; padding-left: 7px; } .b5 { width: 161px; padding-left: 3px; } .b6 { width: 161px; padding-left: 3px; } .b7 { width: 129px; padding-left: 3px; }
.b3 > svg { margin: 0 2px 0 3px; }
.pair { display: flex; flex-direction: column; gap: 2px; height: 30px; }
.pair span { height: 14px; line-height: 14px; }
.lab { width: 11px; padding-left: 1px; }
.unit { width: 26px; padding-left: 2px; }
.pct { width: 23px; padding-left: 5px; }
.pct span { line-height: 17px; }
.axes { width: 17px; height: 30px; background: #c0c0c0; margin-right: 2px; margin-left: -1px; }
.axes svg { width: 17px; height: 30px; }
.field { background: #fff; border: 1px solid; border-color: #a0a0a0 #fff #fff #a0a0a0; box-shadow: inset 1px 1px #696969, inset -1px -1px #e3e3e3; padding-left: 6px; overflow: hidden; letter-spacing: 0; }
.field.off { background: #f0f0f0; color: #6d6d6d; }
.pair .field { line-height: 13px; padding-left: 4px; letter-spacing: -.1px; }
.w45 { width: 45px; } .w31 { width: 31px; }
.btn { display: flex; align-items: center; justify-content: center; background: #f0f0f0; border: 1px solid; border-color: #fff #696969 #696969 #fff; box-shadow: inset -1px -1px #a0a0a0, inset 1px 1px #e3e3e3; flex: none; padding-bottom: 1px; }
.sq { width: 24px; height: 26px; margin-right: 1px; padding-bottom: 0; }
.sq svg { width: 22px; height: 24px; }
.rot { width: 38px; height: 19px; line-height: 17px; }
.deg { width: 12px; align-self: flex-start; padding: 2px 0 0 1px; }
.proc { width: 61px; padding-top: 5px; }
.pno { width: 41px; height: 19px; line-height: 17px; }
.dis { color: #a0a0a0; text-shadow: 1px 1px #fff; }

.work { display: flex; height: 845px; }
.tools { width: 33px; border-right: 2px solid #8c8c8c; }
.hdots { height: 8px; background: radial-gradient(#bbb 1px, transparent 1.500px) 3px 3px / 4px 4px repeat-x; width: 28px; }
.cell { height: 31px; width: 30px; padding: 3px; }
.cell.on { background: #f8f8f8; border: 1px solid; border-color: #a0a0a0 #fff #fff #a0a0a0; padding: 3px 2px 1px; }
.cell svg { width: 24px; height: 24px; }
.tools hr { margin: 3px 2px 2px; border: 0; height: 1px; background: #a0a0a0; }
.editor { display: grid; grid-template: 21px 807px 17px / 18px 1315px 17px; }
.corner { background: #fff; border: solid #888; border-width: 2px 1px 1px 0; }
.hruler { grid-column: 2 / 4; width: 1332px; height: 21px; }
.vruler { grid-row: 2 / 4; width: 18px; height: 824px; }
.canvas { width: 1315px; height: 807px; }
.hruler text, .vruler text { font: bold 12px "DejaVu Sans Condensed", "DejaVu Sans", sans-serif; fill: #333; letter-spacing: 0; }
.dash { fill: none; stroke: #a5a598; stroke-dasharray: 3 3; shape-rendering: crispEdges; }
.dash.light { stroke: #f4f4f4; }
.ink { fill: none; stroke: #000; shape-rendering: crispEdges; }
.ink.red { stroke: #f00; }
.ink.red path { vector-effect: non-scaling-stroke; }
.vscroll { background: #f0f0f0; display: flex; flex-direction: column; align-items: center; }
.vscroll b { width: 17px; height: 17px; background: #cdcdcd; margin: 270px 1px auto 0; }
.vscroll .up { margin: 9px 2px 0 0; } .vscroll .down { margin: 0 2px 6px 0; }
.hscroll { grid-column: 2 / 4; background: #f0f0f0; display: flex; align-items: center; padding: 0 24px 0 8px; }
.hscroll b { width: 17px; height: 17px; background: #cdcdcd; margin-left: 741px; margin-right: auto; }
.chev { width: 6px; height: 6px; border: solid #505050; border-width: 0 2px 2px 0; transform: rotate(-45deg); flex: none; }
.chev.left { transform: rotate(135deg); } .chev.up { transform: rotate(-135deg); } .chev.down { transform: rotate(45deg); }

.panels { width: 297px; border-left: 1px solid #fff; display: flex; flex-direction: column; }
.panel { padding-left: 5px; }
.upper { height: 609px; border-bottom: 1px solid #a0a0a0; }
.lower { height: 237px; border-top: 1px solid #fff; border-bottom: 1px solid #a0a0a0; }
.caption { display: flex; height: 18px; align-items: center; }
.caption i { width: 273px; height: 6px; border: 1px solid; border-color: #fff #a0a0a0 #a0a0a0 #fff; background: linear-gradient(#f0f0f0 1px, #a0a0a0 1px 2px, #fff 2px 3px, #f0f0f0 3px); }
.caption b { margin: -1px 0 0 6px; font: bold 11px/12px "DejaVu Sans", sans-serif; }
.lower .caption { height: 16px; }
.tabs { display: flex; align-items: flex-end; height: 20px; padding-left: 2px; background: linear-gradient(#fff, #fff) 44px 19px / 243px 1px no-repeat; }
.tabs span { height: 17px; line-height: 14px; border: 1px solid; border-color: #fff #696969 transparent #fff; border-bottom: 0; border-radius: 2px 2px 0 0; box-shadow: inset -1px 0 #a0a0a0; padding-left: 3px; margin-right: 1px; width: 41px; letter-spacing: -.25px; }
.tabs span.on { height: 20px; width: 43px; line-height: 15px; padding-left: 4px; background: #f0f0f0; }
.tabs span:nth-child(2) { width: 44px; }
.layers { margin: 2px 0 0 4px; width: 272px; height: 117px; background: #fff; border: 1px solid; border-color: #a0a0a0 #fff #fff #a0a0a0; box-shadow: inset 1px 1px #696969; padding: 1px 0 0 1px; }
.lr { display: grid; grid-template-columns: 50px 125px 50px 44px; height: 14px; line-height: 13px; text-align: center; border-bottom: 1px solid #e8e8e8; letter-spacing: -.1px; }
.lr span { border-right: 1px solid #e8e8e8; }
.lr.head { height: 18px; line-height: 15px; background: #f0f0f0; border: 0; margin-bottom: 1px; }
.lr.head span { border: 1px solid; border-color: #fff #808080 #808080 #fff; }
.lr.head span:first-child { text-align: left; padding-left: 4px; }
.lr.head span:last-child { padding-left: 4px; }
.lr.sel { color: #fff; font-size: 12px; }
.lr.sel span { background: #0000c8; border-color: #fff; }
.lr.sel span:last-child { padding-left: 5px; }
.lr.sel span:first-child { background: #000; }
.lr.last { height: 10px; border: 0; }
.lscroll { height: 16px; background: #f0f0f0; display: flex; align-items: center; padding: 0 7px; }
.lscroll b { width: 230px; height: 16px; background: #cdcdcd; margin: 0 auto 0 4px; }
.props { margin: 5px 0 0 4px; width: 272px; height: 145px; background: #fff; border: 1px solid; border-color: #a0a0a0 #fff #fff #a0a0a0; box-shadow: inset 1px 1px #696969; padding: 1px 1px 0 1px; letter-spacing: -.1px; }
.props div { display: grid; grid-template-columns: 132px 135px; column-gap: 2px; height: 20px; line-height: 17px; }
.props span { background: #dcdcdc; border-bottom: 1px solid #e8e8e8; padding-left: 2px; }
.props b { font-weight: 400; border-bottom: 1px solid #dcdcdc; padding: 1px 0 0 3px; }
.props .black { background: #000; margin: 2px 0 2px 2px; border: 0; width: 131px; }
.lasers { display: flex; gap: 1px; margin: 3px 0 0 6px; }
.lasers .btn { height: 20px; width: 40px; letter-spacing: -.15px; padding-bottom: 2px; }
.lasers .btn + .btn { width: 44px; padding-right: 3px; }
.box { border: 1px solid #a0a0a0; box-shadow: 1px 1px #fff, inset 1px 1px #fff; }
.legend { display: block; width: max-content; height: 14px; margin: -7px 0 0 6px; padding: 0 3px 0 1px; background: #f0f0f0; }
.array { margin: 11px 0 0 4px; width: 274px; height: 102px; }
.array .legend { letter-spacing: -.15px; }
.ahead { display: grid; grid-template-columns: 36px 50px 43px 65px 48px; padding-left: 27px; height: 15px; line-height: 17px; }
.clip { overflow: hidden; width: 50px; height: 17px; justify-self: start; display: flex; justify-content: flex-end; letter-spacing: -.55px; }
.abody { display: flex; gap: 3px; padding: 2px 0 0 7px; }
.agrid { display: grid; grid-template: 19px 19px / 12px 34px 47px 47px 47px; gap: 2px; padding-top: 1px; }
.agrid span { line-height: 21px; }
.agrid .field { line-height: 16px; padding-left: 4px; }
.mirror { border: 1px solid #808080; width: 63px; height: 42px; display: grid; grid-template-columns: 17px 12px 17px 12px; align-content: space-evenly; align-items: center; padding-left: 4px; }
.ck { display: inline-block; width: 12px; height: 12px; background: #fff; border: 1px solid; border-color: #a0a0a0 #fff #fff #a0a0a0; box-shadow: inset 1px 1px #696969, inset -1px -1px #e3e3e3; position: relative; flex: none; }
.ck.off { background: #f0f0f0; }
.ck.tick::after { content: ""; position: absolute; left: 2px; top: 2px; width: 7px; height: 4px; border: solid #000; border-width: 0 0 2px 2px; transform: rotate(-48deg); }
.ck.tick.off::after { border-color: #a0a0a0; }
.abtns { display: flex; align-items: center; padding-left: 2px; gap: 1px; margin-top: -1px; }
.abtn { width: 30px; height: 33px; border: 2px solid #000; display: grid; place-items: center; box-shadow: inset -1px -1px #808080; }
.abtn svg { width: 24px; height: 26px; }
.abtns .btn { height: 26px; }
.v1 { width: 75px; } .v2 { width: 68px; } .v3 { width: 56px; } .v4 { width: 32px; }
.upper::after { content: ""; display: block; height: 2px; background: #a0a0a0; margin: 8px 2px 0 0; }

.job { margin: 6px 0 0 1px; width: 285px; height: 146px; }
.jbtns { display: grid; grid-template: 24px 24px / 92px 101px 73px; gap: 1px; padding: 2px 0 0 8px; letter-spacing: -.2px; }
.pos { display: flex; padding: 4px 0 0 58px; }
.pos > span:first-child { width: 46px; line-height: 29px; }
.combo { display: flex; background: #fff; border: 1px solid #a0a0a0; flex: none; }
.combo em { flex: 1; padding-left: 3px; align-self: center; }
.combo i { width: 17px; border-left: 1px solid #a0a0a0; background: #f0f0f0; display: grid; place-items: center; }
.combo i::after { content: ""; border: solid transparent; border-width: 4px 4px 0; border-top-color: #000; }
.combo.sunk { border-color: #a0a0a0 #fff #fff #a0a0a0; box-shadow: inset 1px 1px #696969, inset -1px -1px #e3e3e3; padding: 1px; }
.combo.sunk i { border: 1px solid; border-color: #fff #696969 #696969 #fff; box-shadow: inset -1px -1px #a0a0a0; }
.pos .combo, .device .combo { width: 172px; height: 20px; }
.pos .combo { margin-top: 1px; letter-spacing: -.2px; }
.jopts { display: flex; }
.checks { width: 203px; padding: 1px 0 0 8px; }
label { display: flex; align-items: center; gap: 5px; letter-spacing: -.4px; }
.checks label { height: 15px; }
.checks .sub { padding-left: 17px; margin-top: 3px; }
.scales { display: grid; gap: 1px; padding-top: 0; align-content: start; }
.scales .btn { width: 73px; height: 24px; }
.device { margin: 10px 0 0 1px; width: 285px; height: 43px; display: flex; flex-wrap: wrap; align-content: flex-start; padding-left: 7px; }
.device .legend { width: 260px; margin-left: 0; background: linear-gradient(90deg, #f0f0f0 35px, transparent 35px); }
.device .btn { width: 93px; height: 24px; margin: 4px 3px 0 0; padding-bottom: 2px; }
.device .combo { margin: 6px 0 0 1px; letter-spacing: -.15px; }

.palette { height: 35px; border-top: 1px solid #fff; border-bottom: 1px solid #a0a0a0; display: flex; align-items: center; gap: 1.5px; }
.pgrip { width: 18px; display: flex; flex-direction: column; align-items: center; padding-right: 4px; }
.pgrip b { font: bold 11px/12px "DejaVu Sans", sans-serif; }
.pgrip i { width: 5px; height: 9px; border: 1px solid #a0a0a0; border-top: 0; margin-top: 3px; background: linear-gradient(90deg, #fff 2px, #a0a0a0 2px); }
.palette > i { width: 24px; height: 26px; border: 1px solid #a0a0a0; }
.c1 { background: #000; } .c2 { background: #00f; } .c3 { background: #f00; } .c4 { background: #0f0; } .c5 { background: #fa8072; } .c6 { background: #ff0; } .c7 { background: #1e90ff; } .c8 { background: #8b3a10; } .c9 { background: #808000; } .c10 { background: #008060; } .c11 { background: #ff4500; } .c12 { background: #400080; } .c13 { background: #ffd0dc; } .c14 { background: #b0a0ff; } .c15 { background: #d8ff98; } .c16 { background: #ff9058; } .c17 { background: #db7093; } .c18 { background: #8a70db; } .c19 { background: #78dc78; } .c20 { background: #b4a070; }

.status { height: 20px; border-top: 1px solid #fff; padding-top: 1px; display: grid; grid-template-columns: 1252px 21px 9px 201px 189px; column-gap: 2px; font-size: 12px; letter-spacing: -.39px; }
.status span { border: 1px solid #a0a0a0; height: 18px; line-height: 16px; padding-left: 2px; overflow: hidden; }
.status .size { letter-spacing: -.5px; }

.taskbar { height: 40px; background: #464646; display: flex; color: #fff; font-size: 15px; letter-spacing: 0; }
.start { width: 49px; padding: 12px 16px; }
.start svg { width: 17px; height: 17px; }
.search { width: 287px; height: 39px; background: #f2f2f2; color: #333; display: flex; align-items: center; padding-left: 11px; gap: 11px; letter-spacing: -.5px; }
.search svg { width: 17px; height: 17px; }
.task { width: 49px; height: 40px; display: grid; place-items: center; position: relative; }
.task svg { width: 24px; height: 24px; }
.run { box-shadow: inset 0 -2px #76b9ed; }
.task.run:not(.active) { width: 41px; margin: 0 4px 0 5px; }
.active { background: #727272; }
.f360 b { position: absolute; top: 9px; left: 18px; font: bold 12px/14px "Noto Sans", sans-serif; }
.f360 small { position: absolute; top: 25px; left: 18px; font: bold 6px/7px "Noto Sans", sans-serif; }
.tray { margin-left: auto; display: flex; align-items: center; }
.pollen { width: 18px; height: 24px; margin-right: 11px; }
.news { width: 164px; letter-spacing: -.93px; }
.ticons { width: 88px; height: 24px; }
.clock { width: 70px; text-align: center; font-size: 12px; line-height: 18px; letter-spacing: -.45px; margin-left: 1px; }
.note { width: 18px; height: 18px; margin: 0 19px 0 9px; }
.peek { width: 5px; height: 40px; border-left: 1px solid #8a8a8a; }

.dialog { position: absolute; left: 536px; top: 305px; width: 608px; height: 399px; background: #f0f0f0; border: 1px solid #606060; box-shadow: 0 4px 16px rgba(0, 0, 0, .4); }
.dtitle { height: 26px; background: #fff; display: flex; align-items: center; justify-content: space-between; padding: 0 9px 2px 3px; font-size: 12px; letter-spacing: -.5px; }
.dtitle svg { width: 12px; height: 12px; }
.dbody { display: flex; height: 371px; padding: 1px 0 0 3px; }
.dlist { width: 39px; height: 362px; border-right: 1px solid #a0a0a0; box-shadow: 1px 0 #fff; }
.dlist .btn { width: 33px; height: 23px; }
.dlist .btn.first { padding-right: 3px; }
.dlist .btn svg { width: 18px; height: 10px; }
.list { width: 32px; height: 311px; margin: 4px 0 3px; background: #fff; border: 1px solid; border-color: #a0a0a0 #fff #fff #a0a0a0; box-shadow: inset 1px 1px #696969; padding: 3px 1px 0 1px; display: flex; flex-direction: column; justify-content: space-between; }
.list b { height: 13px; background: #000; }
.list div { height: 17px; background: #f0f0f0; display: flex; align-items: center; justify-content: space-between; padding: 0 5px; }
.dmid { width: 275px; margin-left: 5px; }
.lib { height: 30px; }
.form { padding-top: 5px; height: 154px; }
.fr { display: flex; height: 24px; }
.f1 { height: 25px; } .f2 { height: 23px; } .f4 { height: 26px; } .f5 { height: 23px; }
.fl { width: 106px; text-align: right; line-height: 23px; margin-right: 11px; letter-spacing: -.15px; }
.f4 .fl { line-height: 25px; } .f5 .fl { line-height: 20px; }
.fr .field, .fr .combo { width: 78px; height: 22px; line-height: 18px; }
.fr .swatch { height: 19px; background: #000; }
.fr .ck { margin: 5px 5px 0 6px; }
.df { line-height: 23px; }
.adv { width: 75px; height: 24px; margin: -2px 0 0 4px; }
.power { width: 274px; height: 178px; padding-left: 26px; }
.phead { display: flex; gap: 4px; padding: 5px 0 0 35px; height: 23px; }
.phead span { width: 68px; letter-spacing: -.25px; }
.pr { display: flex; height: 24.300px; }
.pr .ck { margin-top: 6px; }
.pr span { line-height: 25px; }
.pr .ck + span { width: 22px; margin-left: 6px; }
.pr .field { width: 58px; height: 22px; line-height: 18px; margin-right: 11px; }
.pr .field + .ck { margin-left: -4px; }
.pr .ck + .df { margin-left: 5px; }
.dright { margin-left: 4px; width: 276px; padding-top: 9px; }
.scan { width: 275px; height: 300px; padding-top: 16px; }
.opts { display: grid; grid-template: 16px 17px 16px / 115px 140px; padding-left: 29px; }
.sr { display: flex; }
.sr .fl { width: 97px; margin-right: 7px; }
.sr .field, .sr .combo { width: 90px; height: 22px; line-height: 18px; }
.s1 { margin-top: 6px; height: 26px; } .s2 { height: 24px; } .s3 { height: 25px; }
.s4 { height: 28px; }
.mm { margin-left: 5px; line-height: 23px; }
.sr .adv { margin-top: -1px; height: 23px; }
.sr .unitc { width: 57px; height: 21px; margin: 1px 0 0 4px; }
.rule { height: 2px; margin: 1px 0 0 8px; background: linear-gradient(#a0a0a0 1px, #fff 1px); }
.eng { padding: 4px 0 4px 11px; }
.s5 { height: 26px; }
.sync { margin-top: 8px; gap: 6px; }
.okrow { display: flex; gap: 12px; padding: 9px 0 0 93px; }
.okrow .btn { width: 75px; height: 24px; }
```
FILE: script.js
```js
const NS = "http://www.w3.org/2000/svg";
const STEP = 6.673;

function add(parent, tag, attrs, text) {
  const el = document.createElementNS(NS, tag);
  for (const key in attrs) el.setAttribute(key, attrs[key]);
  if (text) el.textContent = text;
  parent.appendChild(el);
}

// Horizontal ruler: values fall from left to right, 1000.0 sits at x = 135.5.
const h = document.getElementById("hruler");
add(h, "rect", { x: 51, y: 110, width: 1332, height: 21, fill: "#fafafa" });
let path = "";
for (let v = 1012; v >= 814; v--) {
  const x = Math.floor(135.5 + (1000 - v) * STEP) + 0.5;
  const top = v % 10 === 0 ? 112 : v % 5 === 0 ? 122 : 125;
  path += `M${x} ${top}V128`;
}
add(h, "path", { d: path, stroke: "#000", "shape-rendering": "crispEdges" });
for (let v = 1010; v >= 820; v -= 10) {
  const w = v >= 1000 ? 43 : 35;
  add(h, "text", { x: 135 + (1000 - v) * STEP - w, y: 123.5, textLength: w, lengthAdjust: "spacingAndGlyphs" }, v.toFixed(1));
}
add(h, "rect", { x: 51, y: 110, width: 1332, height: 2, fill: "#808080" });
add(h, "rect", { x: 51, y: 129, width: 1332, height: 2, fill: "#808080" });

// Vertical ruler: 300.0 sits at y = 367.5.
const r = document.getElementById("vruler");
add(r, "rect", { x: 33, y: 131, width: 18, height: 824, fill: "#fafafa" });
path = "";
for (let v = 265; v <= 387; v++) {
  const y = Math.floor(367.5 + (v - 300) * STEP) + 0.5;
  const left = v % 10 === 0 ? 33 : v % 5 === 0 ? 44 : 46;
  path += `M${left} ${y}H49`;
}
add(r, "path", { d: path, stroke: "#000", "shape-rendering": "crispEdges" });
for (let v = 270; v <= 380; v += 10) {
  const y = 367 + (v - 300) * STEP;
  add(r, "text", { transform: `translate(45 ${y}) rotate(-90)`, textLength: 35, lengthAdjust: "spacingAndGlyphs" }, v.toFixed(1));
}
add(r, "rect", { x: 49, y: 131, width: 2, height: 824, fill: "#909090" });
```
